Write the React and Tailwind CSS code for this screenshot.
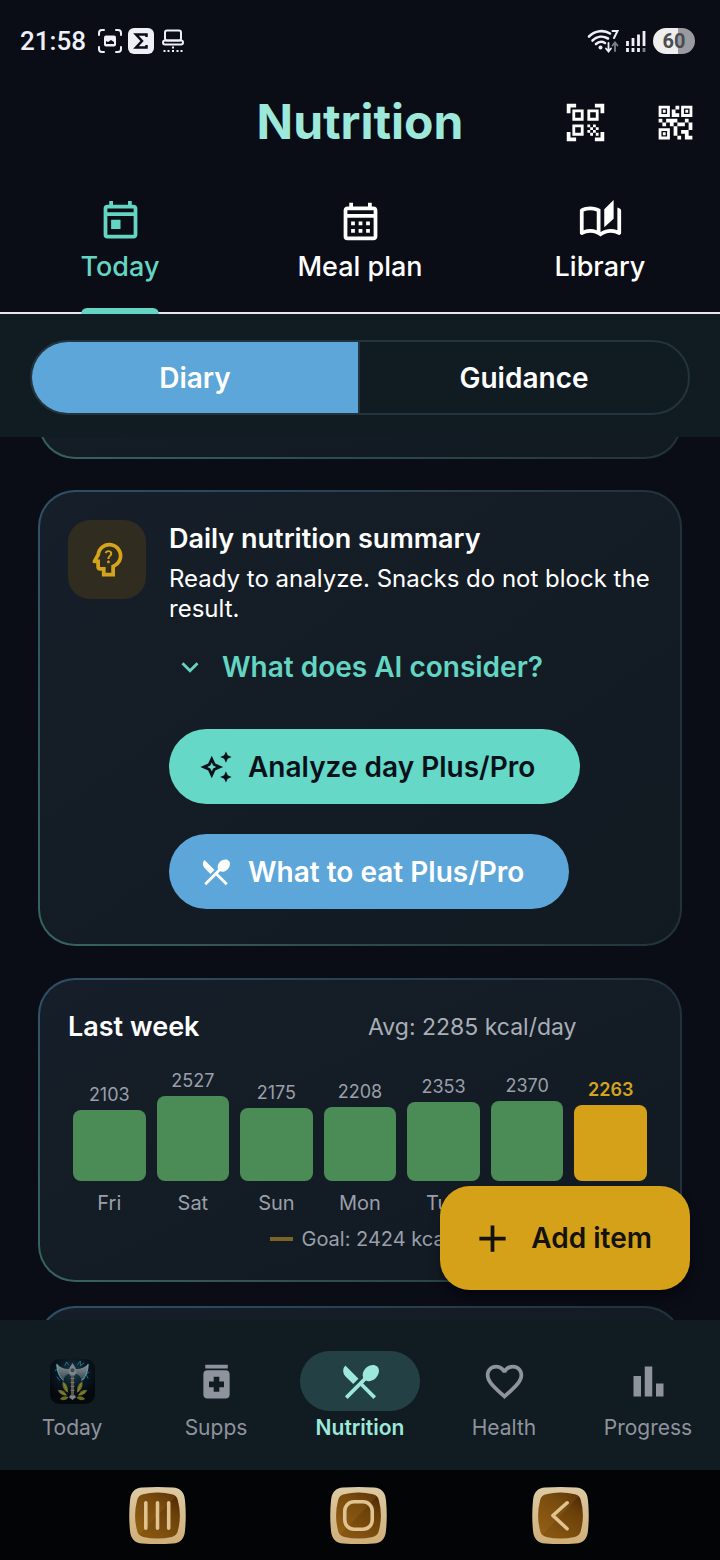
import { useState } from "react";
import {
    MdAdd,
    MdBarChart,
    MdExpandMore,
    MdFavoriteBorder,
    MdMedication,
    MdOutlineAutoAwesome,
    MdOutlineAutoStories,
    MdOutlineCalendarMonth,
    MdOutlinePsychologyAlt,
    MdOutlineToday,
    MdQrCode2,
    MdQrCodeScanner,
    MdRestaurantMenu,
} from "react-icons/md";

const tabs = [
    { id: "today", label: "Today", Icon: MdOutlineToday },
    { id: "plan", label: "Meal plan", Icon: MdOutlineCalendarMonth },
    { id: "library", label: "Library", Icon: MdOutlineAutoStories },
];

const week = [
    { day: "Fri", kcal: 2103 },
    { day: "Sat", kcal: 2527 },
    { day: "Sun", kcal: 2175 },
    { day: "Mon", kcal: 2208 },
    { day: "Tue", kcal: 2353 },
    { day: "Wed", kcal: 2370 },
    { day: "Thu", kcal: 2263, today: true },
];

const maxKcal = Math.max(...week.map((d) => d.kcal));

const AxeLogo = ({ className }) => (
    <svg viewBox="0 0 46 46" className={className}>
        <defs>
            <radialGradient id="axe-bg" cx="50%" cy="30%" r="60%">
                <stop offset="0" stopColor="#174152" />
                <stop offset="0.55" stopColor="#0a1722" />
                <stop offset="1" stopColor="#05080d" />
            </radialGradient>
            <linearGradient id="axe-blade" x1="0" y1="0" x2="0" y2="1">
                <stop offset="0" stopColor="#8b959b" />
                <stop offset="1" stopColor="#38454d" />
            </linearGradient>
        </defs>
        <rect width="46" height="46" rx="10" fill="url(#axe-bg)" />
        <path d="M5 12l3-2-1-4M15 7l2-4 2 3M28 6l3-4v5l4-3M40 13l-3 3 2 4M7 18l3 4M33 22l3-3" fill="none" stroke="#2f86a5" strokeWidth="0.8" />
        <path d="M21 10C16 11 11 9 7 5c0 7 2 13 7 17 0-4 3-7 7-7z" fill="url(#axe-blade)" />
        <path d="M25 10c5 1 10-1 14-5 0 7-2 13-7 17 0-4-3-7-7-7z" fill="url(#axe-blade)" />
        <path d="M7 5c0 7 2 13 7 17M39 5c0 7-2 13-7 17" fill="none" stroke="#58b2cc" strokeWidth="0.9" />
        <path d="M20 9l3-5 3 5 1 5-2 3h-4l-2-3z" fill="#7b858b" />
        <circle cx="23" cy="11.500" r="2" fill="#3c474e" />
        <rect x="21.500" y="17" width="3" height="20" fill="#5d564c" />
        <path d="M21 20h4M21 24h4M21 28h4M21 32h4" stroke="#8c8474" strokeWidth="0.8" />
        <path d="M20.500 37h5l1 2-3.500 3-3.500-3z" fill="#7c8589" />
        <g fill="#666b25">
            <path d="M18 34c-4-2-6-6-5-11 4 2 6 6 5 11z" />
            <path d="M17 37c-4 1-7-1-9-5 4-1 7 1 9 5z" />
            <path d="M19 39c-2 3-6 4-9 2 2-3 6-4 9-2z" />
            <path d="M28 34c4-2 6-6 5-11-4 2-6 6-5 11z" />
            <path d="M29 37c4 1 7-1 9-5-4-1-7 1-9 5z" />
            <path d="M27 39c2 3 6 4 9 2-2-3-6-4-9-2z" />
        </g>
        <path d="M18 34l-4-9M17 37l-7-4M28 34l4-9M29 37l7-4" stroke="#9c963b" strokeWidth="0.700" />
    </svg>
);

const navItems = [
    { id: "today", label: "Today", Icon: AxeLogo },
    { id: "supps", label: "Supps", Icon: MdMedication },
    { id: "nutrition", label: "Nutrition", Icon: MdRestaurantMenu },
    { id: "health", label: "Health", Icon: MdFavoriteBorder },
    { id: "progress", label: "Progress", Icon: MdBarChart },
];

const StatusBar = () => (
    <div className="flex h-[82px] items-center justify-between pl-5 pr-[25px] font-['Roboto',sans-serif] text-[#eef0f5]">
        <div className="flex items-center gap-2">
            <span className="mr-1 text-[26px] leading-8 font-medium">21:58</span>
            <svg viewBox="0 0 24 24" className="h-6 w-6" fill="none" stroke="currentColor" strokeWidth="2" strokeLinecap="round">
                <path d="M1 6V4a3 3 0 0 1 3-3h2M18 1h2a3 3 0 0 1 3 3v2M23 18v2a3 3 0 0 1-3 3h-2M6 23H4a3 3 0 0 1-3-3v-2" />
                <rect x="6" y="6.500" width="12" height="11" rx="2" fill="currentColor" stroke="none" />
                <path d="M8 15v-3l2 1 3-2 3 2v2z" fill="#0a0c16" stroke="none" />
            </svg>
            <svg viewBox="0 0 26 26" className="-ml-0.5 h-[26px] w-[26px]">
                <rect width="26" height="26" rx="6" fill="#eef0f5" />
                <path d="M18.500 9V6.500H8l6 6.500-6 6.500h10.500V17" fill="none" stroke="#0a0c16" strokeWidth="2.500" />
            </svg>
            <svg viewBox="0 0 22 24" className="h-6 w-[22px]" fill="none" stroke="currentColor" strokeWidth="2">
                <rect x="3" y="1.500" width="16" height="10" rx="2" />
                <rect x="1" y="11.500" width="20" height="4" rx="2" />
                <path d="M1.500 22h2M5.500 22h2M10 22h2M14.500 22h2M18.500 22h2M10 18.500h2" />
            </svg>
        </div>
        <div className="flex items-center gap-[7px]">
            <svg viewBox="0 0 32 24" className="h-6 w-8" fill="none" stroke="currentColor" strokeWidth="2.600" strokeLinecap="round">
                <path d="M2 7.500C8 1.500 17 .500 23 4.500M5.500 11.500c4.500-4.300 10.500-4.800 15.500-2M9 15c2.500-2.300 6-2.800 9-1" />
                <circle cx="13.500" cy="18.500" r="2" fill="currentColor" stroke="none" />
                <path d="M25.500 2h5l-3.500 7" strokeWidth="2" />
                <path d="M21.500 14v8M19 19.500l2.500 3 2.500-3" strokeWidth="1.800" />
                <path d="M28 22v-8M25.500 16.500l2.500-3 2.500 3" strokeWidth="1.800" stroke="#7d8088" />
            </svg>
            <svg viewBox="0 0 20 22" className="h-[22px] w-5" stroke="currentColor" strokeWidth="2.800">
                <path d="M1.500 11v5M7 8v8M12.500 4.500v11.500M18 1v15" />
                <path d="M1.500 18v4M7 18v4M12.500 18v4" />
                <path d="M18 18v4" stroke="#7d8088" />
            </svg>
            <span className="flex h-[26px] w-[42px] items-center justify-center rounded-full bg-linear-to-r from-[#eeeeee] from-60% to-[#9a9ba0] to-60% text-xl leading-6 font-bold text-[#4a4c50]">
                60
            </span>
        </div>
    </div>
);

const Card = ({ className = "", children }) => (
    <section
        className={`rounded-[37px] bg-[linear-gradient(to_right,transparent,#22323c),linear-gradient(to_bottom,#2f5068,#37645f)] p-0.5 ${className}`}
    >
        <div className="h-full rounded-[35px] bg-linear-to-br from-[#161f29] to-[#111a21] p-7">{children}</div>
    </section>
);

const SummaryCard = () => (
    <Card>
        <div className="flex gap-[23px] pb-[7px]">
            <div className="flex h-[79px] w-[78px] shrink-0 items-center justify-center rounded-[22px] bg-[#302c20] text-[#d5a31c]">
                <MdOutlinePsychologyAlt className="h-[45px] w-[45px]" />
            </div>
            <div className="flex flex-col items-start">
                <h2 className="text-[27px] leading-[38px] font-semibold">Daily nutrition summary</h2>
                <p className="mt-1.5 text-2xl leading-[30px]">Ready to analyze. Snacks do not block the result.</p>
                <button className="mt-5 flex h-[45px] items-center gap-[15px] px-1 text-[28px] font-semibold text-[#65d5c3]">
                    <MdExpandMore className="h-[34px] w-[34px]" />
                    What does AI consider?
                </button>
                <button className="mt-10 flex h-[75px] items-center gap-[15px] rounded-full bg-[#65d8c7] pr-[45px] pl-[30px] text-[28px] font-semibold text-[#08101a]">
                    <MdOutlineAutoAwesome className="h-[34px] w-[34px]" />
                    Analyze day Plus/Pro
                </button>
                <button className="mt-[30px] flex h-[75px] items-center gap-[15px] rounded-full bg-[#5ca6d9] pr-[45px] pl-[30px] text-[28px] font-semibold">
                    <MdRestaurantMenu className="h-[34px] w-[34px]" />
                    What to eat Plus/Pro
                </button>
            </div>
        </div>
    </Card>
);

const WeekCard = () => (
    <Card>
        <div className="grid grid-cols-2 items-center gap-4 leading-[38px]">
            <h2 className="text-[27px] font-semibold">Last week</h2>
            <p className="text-[23px] text-[#a9aeb8]">Avg: 2285 kcal/day</p>
        </div>
        <div className="mt-5 grid grid-cols-7 items-end gap-[11px] px-[5px] text-center text-[#9a9fa9]">
            {week.map((d) => (
                <div key={d.day}>
                    <div className={`text-lg leading-[30px] ${d.today ? "font-semibold text-[#d5a31c]" : ""}`}>{d.kcal}</div>
                    <div
                        className={`rounded-lg ${d.today ? "bg-[#d4a118]" : "bg-[#4b8b55]"}`}
                        style={{ height: Math.round((d.kcal / maxKcal) * 85) }}
                    />
                    <div className="mt-[7px] text-xl leading-[30px]">{d.day}</div>
                </div>
            ))}
        </div>
        <div className="mt-2 flex items-center justify-center gap-2 text-xl leading-[26px] text-[#9a9fa9]">
            <span className="h-1 w-[23px] bg-[#7b6325]" />
            Goal: 2424 kcal
        </div>
    </Card>
);

const SysButton = ({ label, children }) => (
    <button aria-label={label}>
        <svg viewBox="0 0 56 56" className="h-[57px] w-[57px]">
            <path d="M13 .500Q28-.500 43 .500 54 1 55 13 56.500 28 55 43 54 55 43 55.500 28 56.500 13 55.500 2 55 1 43-.500 28 1 13 2 1 13 .500z" fill="url(#sys-frame)" />
            <path d="M14 7Q28 4 42 7 47 8 48 13 52 28 48 43 47 48 42 49 28 52 14 49 9 48 8 43 4 28 8 13 9 8 14 7z" fill="url(#sys-face)" />
            <path d="M8 43Q4 28 8 13 9 8 14 7 28 4 42 7L46 9 10 47z" fill="#c98b2a" opacity="0.15" />
            <g fill="none" stroke="#dfc390" strokeWidth="3.500" strokeLinecap="round" strokeLinejoin="round">
                {children}
            </g>
        </svg>
    </button>
);

const SystemNav = () => (
    <div className="grid h-[90px] grid-cols-3 place-items-center bg-[#030405] pr-[59px] pl-[57px]">
        <svg className="absolute h-0 w-0">
            <defs>
                <linearGradient id="sys-frame" x1="0" y1="0" x2="0" y2="1">
                    <stop offset="0" stopColor="#ddcaa4" />
                    <stop offset="1" stopColor="#cfae78" />
                </linearGradient>
                <linearGradient id="sys-face" x1="1" y1="0" x2="0.400" y2="1">
                    <stop offset="0" stopColor="#482306" />
                    <stop offset="0.400" stopColor="#6b4009" />
                    <stop offset="1" stopColor="#865611" />
                </linearGradient>
            </defs>
        </svg>
        <SysButton label="Recent apps">
            <path d="M16.500 15.500v25M28 15.500v25M39 15.500v25" />
        </SysButton>
        <SysButton label="Home">
            <rect x="14.500" y="14.500" width="27" height="27" rx="9" />
        </SysButton>
        <SysButton label="Back">
            <path d="M34.500 15.500L20.500 28l14 13" />
        </SysButton>
    </div>
);

export default function App() {
    const [tab, setTab] = useState("today");
    const [view, setView] = useState("diary");
    const [page, setPage] = useState("nutrition");

    return (
        <div className="flex h-screen flex-col overflow-hidden bg-[#0a0c16] font-['Inter',sans-serif] text-white">
            <StatusBar />
            <header className="grid h-20 grid-cols-[1fr_auto_1fr] items-center px-[22px]">
                <h1 className="col-start-2 text-[48px] leading-[60px] font-bold text-[#9ce9dc]">Nutrition</h1>
                <div className="flex min-w-0 justify-end gap-[45px]">
                    <button aria-label="Scan code">
                        <MdQrCodeScanner className="h-[45px] w-[45px]" />
                    </button>
                    <button aria-label="Show QR code">
                        <MdQrCode2 className="h-[45px] w-[45px]" />
                    </button>
                </div>
            </header>

            <nav className="mt-[25px] grid grid-cols-3 border-b-2 border-[#e9e4ee]">
                {tabs.map(({ id, label, Icon }) => (
                    <button
                        key={id}
                        onClick={() => setTab(id)}
                        className={`flex flex-col items-center pt-3 ${tab === id ? "text-[#65d5c3]" : "text-white"}`}
                    >
                        <Icon className="h-[45px] w-[45px]" />
                        <span className="mt-1 text-[27px] leading-[38px] font-medium">{label}</span>
                        <span className={`mt-[22px] -mb-0.5 h-1.5 w-[78px] rounded-t-md ${tab === id ? "bg-[#65d5c3]" : ""}`} />
                    </button>
                ))}
            </nav>

            <div className="bg-[#111b22] px-[30px] pt-[26px] pb-[22px]">
                <div className="grid h-[75px] grid-cols-2 divide-x-2 divide-[#23343e] overflow-hidden rounded-full border-2 border-[#23343e] text-[28px] font-semibold">
                    <button className={view === "diary" ? "bg-[#5ca6d9]" : ""} onClick={() => setView("diary")}>
                        Diary
                    </button>
                    <button className={view === "guidance" ? "bg-[#5ca6d9]" : ""} onClick={() => setView("guidance")}>
                        Guidance
                    </button>
                </div>
            </div>

            <div className="relative min-h-0 flex-1">
                <main className="h-full overflow-hidden px-[38px]">
                    <Card className="-mt-[58px] h-20" />
                    <div className="mt-[31px]">
                        <SummaryCard />
                    </div>
                    <div className="mt-8">
                        <WeekCard />
                    </div>
                    <Card className="mt-6 h-20" />
                </main>
                <button className="absolute right-[30px] bottom-[30px] flex h-[104px] items-center gap-4 rounded-[30px] bg-[#d4a118] pr-[38px] pl-[30px] text-[28px] font-semibold text-[#14120c] shadow-lg shadow-black/30">
                    <MdAdd className="h-[45px] w-[45px]" />
                    Add item
                </button>
            </div>

            <nav className="grid h-[150px] shrink-0 grid-cols-5 bg-[#111b22] pt-[31px] pb-[26px]">
                {navItems.map(({ id, label, Icon }) => (
                    <button
                        key={id}
                        onClick={() => setPage(id)}
                        className={`flex flex-col items-center text-[21px] leading-[34px] ${page === id ? "font-semibold text-[#9ce9dc]" : "text-[#8f939d]"}`}
                    >
                        <span className={`flex h-[60px] w-[120px] shrink-0 items-center justify-center rounded-full ${page === id ? "bg-[#234145]" : ""}`}>
                            <Icon className="h-[45px] w-[45px]" />
                        </span>
                        {label}
                    </button>
                ))}
            </nav>
            <SystemNav />
        </div>
    );
}
